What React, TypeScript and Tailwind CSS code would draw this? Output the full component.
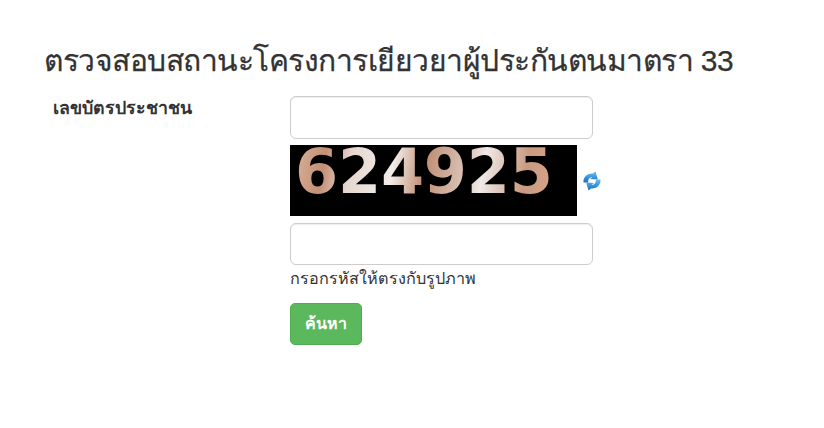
const FONT = "font-['Liberation_Sans','Noto_Sans','DejaVu_Sans',sans-serif]";

function RefreshIcon() {
  return (
    <svg viewBox="0 0 20 20" className="w-[20px] h-[20px] ml-[5px]">
      <defs>
        <linearGradient id="sync" x1="0" y1="0" x2="0" y2="1">
          <stop offset="0" stopColor="#6cbdf2" />
          <stop offset="1" stopColor="#0f6fc6" />
        </linearGradient>
      </defs>
      <path
        d="M1.5 11.5 C1 6 5.5 2 11 2.6 L13.5 0.6 L15.8 8.4 L8 8 L10.4 6.2 C7.6 6 5.8 8.4 6.2 11.5 Z"
        fill="url(#sync)"
      />
      <path
        d="M18.5 8.5 C19 14 14.5 18 9 17.4 L6.5 19.4 L4.2 11.6 L12 12 L9.6 13.8 C12.4 14 14.2 11.6 13.8 8.5 Z"
        fill="url(#sync)"
      />
    </svg>
  );
}

function Captcha() {
  return (
    <div className="w-[287px] h-[71px] bg-black pl-[5px]">
      <div className="font-['DejaVu_Sans',sans-serif] font-bold text-[62px] leading-[54px] tracking-[-0.2px] w-fit blur-[0.6px] text-transparent bg-clip-text bg-[linear-gradient(100deg,#d9b29c_0%,#c48f75_12%,#e6d8d0_22%,#f2ece8_38%,#c08e74_50%,#dcc6bb_66%,#f0eae8_72%,#c99a80_88%,#d8a58c_100%)]">
        624925
      </div>
    </div>
  );
}

export default function App() {
  return (
    <div className={`${FONT} w-[824px] h-[428px] bg-white text-[#333] overflow-hidden pt-[40px] pl-[45px]`}>
      <h1 className="-ml-[1px] text-[30px] leading-[42px] font-normal tracking-[-0.5px] [-webkit-text-stroke:0.25px_#333]">
        ตรวจสอบสถานะโครงการเยียวยาผู้ประกันตนมาตรา 33
      </h1>
      <div className="flex mt-[14px]">
        <label className="w-[245px] pl-[8px] text-[17.75px] leading-[24px] font-bold">
          เลขบัตรประชาชน
        </label>
        <div className="flex flex-col">
          <input className="w-[303px] h-[43px] rounded-[6px] border border-[#ccc] bg-white shadow-[inset_0_1px_1px_rgba(0,0,0,0.075)]" />
          <div className="flex mt-[6px] items-center">
            <Captcha />
            <RefreshIcon />
          </div>
          <input className="w-[303px] h-[42px] mt-[7px] rounded-[6px] border border-[#ccc] bg-white shadow-[inset_0_1px_1px_rgba(0,0,0,0.075)]" />
          <p className="text-[16.2px] leading-[24px] mt-[1px]">กรอกรหัสให้ตรงกับรูปภาพ</p>
          <button className="mt-[13px] w-[72px] h-[42px] rounded-[5px] bg-[#5cb85c] border border-[#4cae4c] text-white font-bold text-[16px]">
            ค้นหา
          </button>
        </div>
      </div>
    </div>
  );
}
